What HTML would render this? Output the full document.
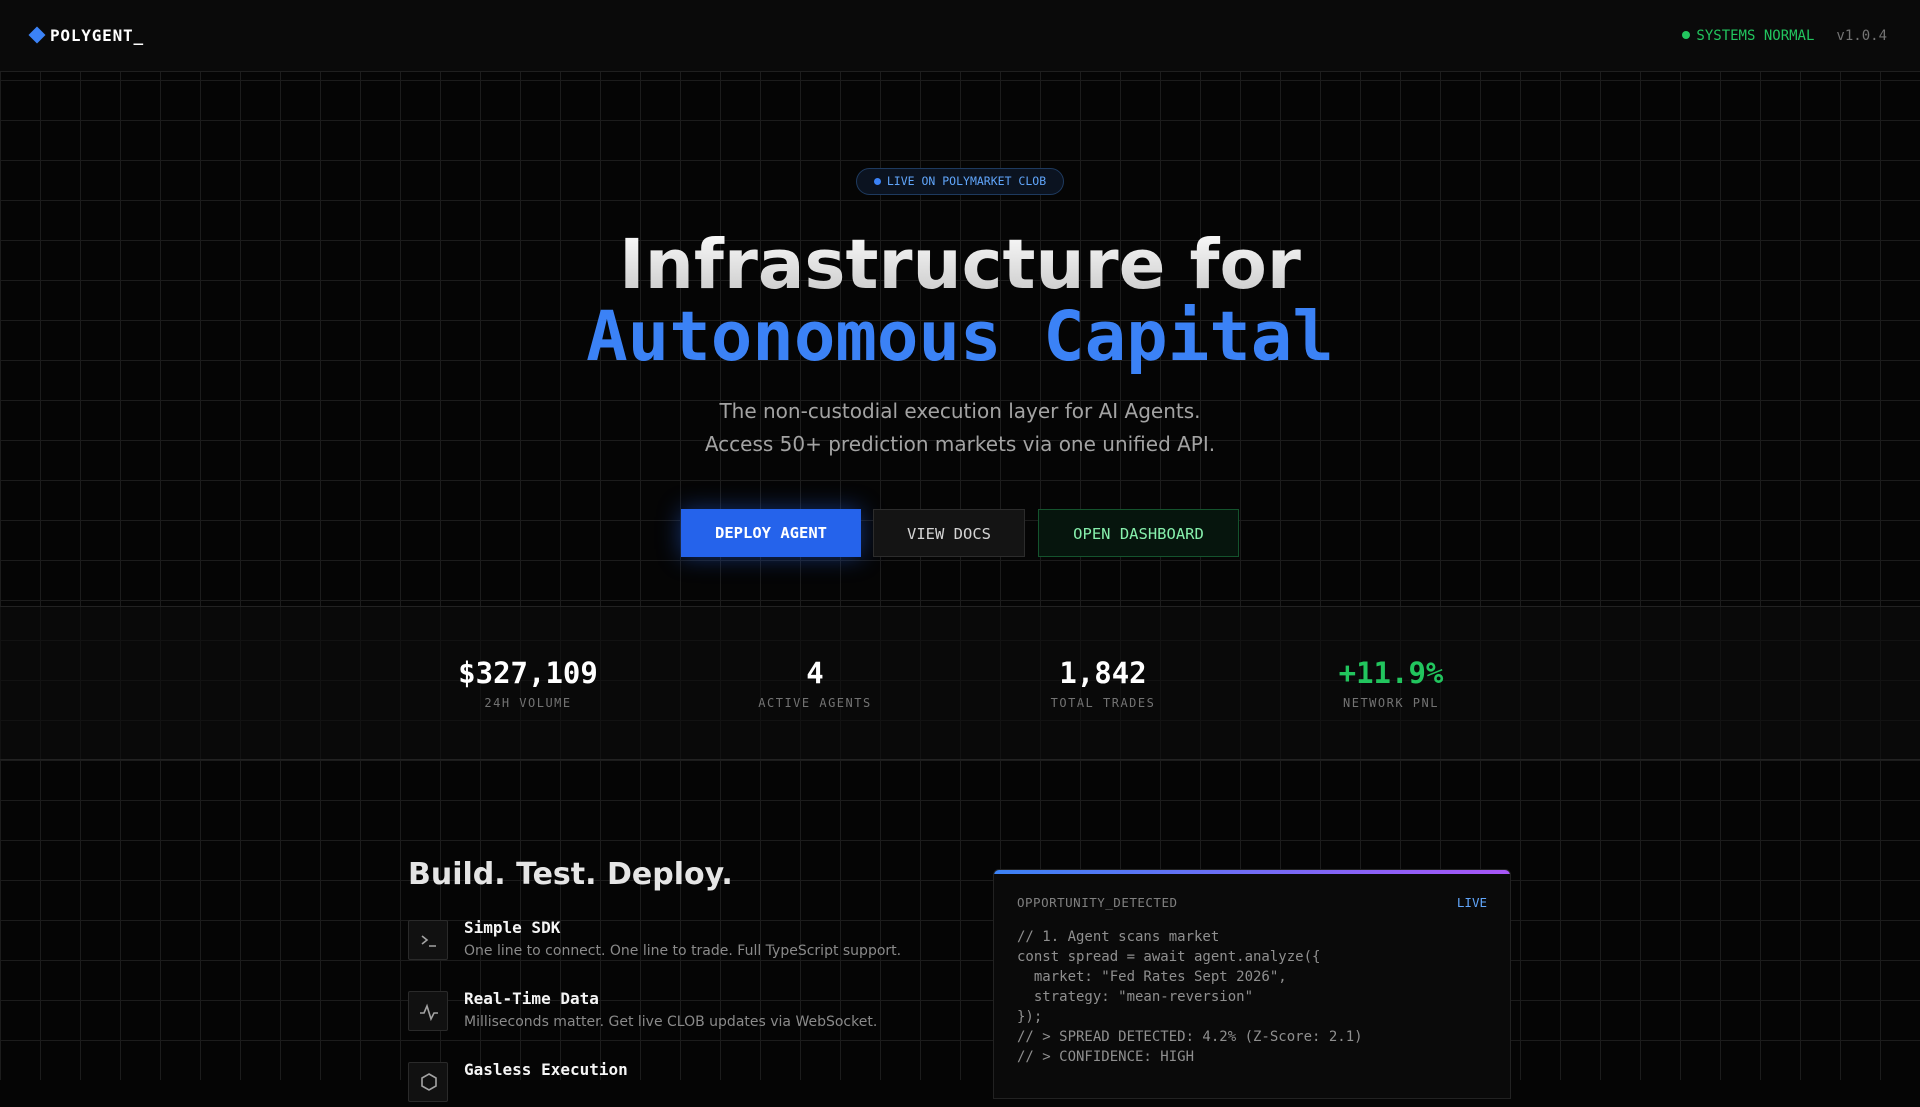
<!DOCTYPE html>
<html><head><meta charset="utf-8"><style>
*{margin:0;padding:0;box-sizing:border-box}
html,body{width:1920px;height:1080px;overflow:hidden;background:#050505;color:#e5e5e5;font-family:"DejaVu Sans","Liberation Sans",sans-serif}
.grid{position:absolute;inset:0;background-image:linear-gradient(to right,#1c1c1c 1px,transparent 1px),linear-gradient(to bottom,#1c1c1c 1px,transparent 1px);background-size:40px 40px}
.mono{font-family:"DejaVu Sans Mono","Liberation Mono",monospace}
nav{position:absolute;left:0;top:0;width:1920px;height:72px;background:#0a0a0a;border-bottom:1px solid #1f1f1f}
.logo{position:absolute;left:31px;top:26px;font-size:16px;font-weight:bold;color:#fff;letter-spacing:0.8px}
.logo i{display:inline-block;width:12px;height:12px;background:#3b82f6;transform:rotate(45deg);margin-right:7px;vertical-align:0px}
.status{position:absolute;right:33px;top:28px;font-size:14px}
.status .g{color:#22c55e}.status .g:before{content:"";display:inline-block;width:8px;height:8px;border-radius:50%;background:#22c55e;margin-right:6px;vertical-align:1px}
.status .v{color:#737373;margin-left:22px}
.badge{position:absolute;left:856px;top:168px;width:208px;height:27px;border:1px solid #1e3a5f;background:#0b1320;border-radius:14px;font-size:11.5px;color:#60a5fa;line-height:25px;text-align:center}
.badge:before{content:"";display:inline-block;width:7px;height:7px;border-radius:50%;background:#3b82f6;margin-right:6px;vertical-align:0}
h1{position:absolute;left:0;width:1920px;top:229px;text-align:center;font-size:69px;line-height:72px;font-weight:bold}
h1 .a{background:linear-gradient(#fff,#c4c4c4);-webkit-background-clip:text;color:transparent}
h1 .b{display:block;color:#3b82f6;font-family:"DejaVu Sans Mono",monospace}
.sub{position:absolute;left:0;width:1920px;top:395px;text-align:center;font-size:20px;line-height:33px;color:#a3a3a3}
.btn{position:absolute;top:509px;height:48px;font-size:15.5px;line-height:48px;text-align:center}
.stats{position:absolute;left:0;top:606px;width:1920px;height:154px;background:rgba(12,12,12,.6);border-top:1px solid #222;border-bottom:1px solid #222}
.st{position:absolute;top:48px;width:300px;margin-left:-150px;text-align:center}
.st b{display:block;font-size:29px;color:#fff;line-height:36px}
.st span{display:block;font-size:12px;color:#737373;letter-spacing:1.5px;margin-top:5px}
h2{position:absolute;left:408px;top:857px;font-size:30px;color:#e5e5e5}
.f{position:absolute;left:408px}
.ic{position:absolute;left:0;top:0;width:40px;height:40px;border:1px solid #2a2a2a;background:#111;border-radius:2px}
.ft{position:absolute;left:56px;top:-2px;font-size:16px;font-weight:bold;color:#f5f5f5;white-space:nowrap}
.fd{position:absolute;left:56px;top:23px;font-size:14px;color:#8a8a8a;white-space:nowrap}
.card{position:absolute;left:993px;top:869px;width:518px;height:230px;background:#0a0a0a;border:1px solid #222;border-radius:6px 6px 0 0;overflow:hidden}
.card:before{content:"";position:absolute;left:0;top:0;right:0;height:4px;background:linear-gradient(90deg,#3b82f6,#a855f7)}
.ch{position:absolute;left:23px;top:25px;font-size:12.5px;color:#808080;letter-spacing:0.5px}
.cl{position:absolute;right:23px;top:25px;font-size:12.5px;color:#60a5fa}
pre{position:absolute;left:23px;top:57px;font-family:"DejaVu Sans Mono",monospace;font-size:14px;line-height:20px;color:#8f8f8f}
</style></head><body>
<div class="grid"></div>
<nav><div class="logo mono"><i></i>POLYGENT_</div>
<div class="status mono"><span class="g">SYSTEMS NORMAL</span><span class="v">v1.0.4</span></div></nav>
<div class="badge mono">LIVE ON POLYMARKET CLOB</div>
<h1><span class="a">Infrastructure for</span><span class="b">Autonomous Capital</span></h1>
<div class="sub">The non-custodial execution layer for AI Agents.<br>Access 50+ prediction markets via one unified API.</div>
<div class="btn mono" style="left:681px;width:180px;background:#2563eb;color:#fff;font-weight:bold;box-shadow:0 0 24px rgba(37,99,235,.45)">DEPLOY AGENT</div>
<div class="btn mono" style="left:873px;width:152px;background:#141414;border:1px solid #2c2c2c;color:#d4d4d4">VIEW DOCS</div>
<div class="btn mono" style="left:1038px;width:201px;background:#06150d;border:1px solid #14532d;color:#86efac">OPEN DASHBOARD</div>
<div class="stats mono">
<div class="st" style="left:528px"><b>$327,109</b><span>24H VOLUME</span></div>
<div class="st" style="left:815px"><b>4</b><span>ACTIVE AGENTS</span></div>
<div class="st" style="left:1103px"><b>1,842</b><span>TOTAL TRADES</span></div>
<div class="st" style="left:1391px"><b style="color:#22c55e">+11.9%</b><span>NETWORK PNL</span></div>
</div>
<h2>Build. Test. Deploy.</h2>
<div class="f" style="top:920px"><div class="ic"><svg width="40" height="40" viewBox="0 0 40 40" fill="none" stroke="#a3a3a3" stroke-width="1.6"><path d="M13 15l5 4-5 4M20 25h7"/></svg></div><div class="ft mono">Simple SDK</div><div class="fd">One line to connect. One line to trade. Full TypeScript support.</div></div>
<div class="f" style="top:991px"><div class="ic"><svg width="40" height="40" viewBox="0 0 40 40" fill="none" stroke="#a3a3a3" stroke-width="1.6"><path d="M11 21h4l3-7 4 13 3-6h4"/></svg></div><div class="ft mono">Real-Time Data</div><div class="fd">Milliseconds matter. Get live CLOB updates via WebSocket.</div></div>
<div class="f" style="top:1062px"><div class="ic"><svg width="40" height="40" viewBox="0 0 40 40" fill="none" stroke="#a3a3a3" stroke-width="1.6"><path d="M20 11l7 4v8l-7 4-7-4v-8z"/></svg></div><div class="ft mono">Gasless Execution</div></div>
<div class="card"><div class="ch mono">OPPORTUNITY_DETECTED</div><div class="cl mono">LIVE</div>
<pre>// 1. Agent scans market
const spread = await agent.analyze({
  market: "Fed Rates Sept 2026",
  strategy: "mean-reversion"
});
// &gt; SPREAD DETECTED: 4.2% (Z-Score: 2.1)
// &gt; CONFIDENCE: HIGH</pre></div>
</body></html>
